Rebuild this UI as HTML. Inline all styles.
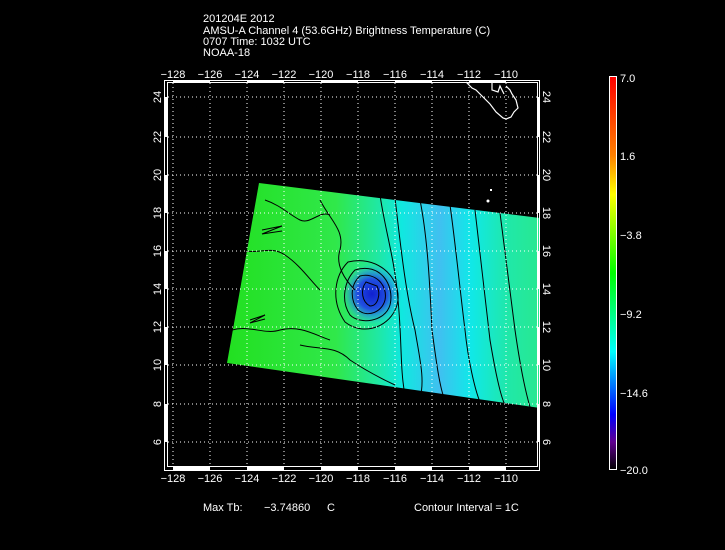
<!DOCTYPE html>
<html><head><style>
html,body{margin:0;padding:0;background:#000;width:725px;height:550px;overflow:hidden}
svg{display:block}
text{font-family:"Liberation Sans","DejaVu Sans",sans-serif;fill:#fff;font-size:11px}
</style></head><body>
<svg width="725" height="550" viewBox="0 0 725 550" xmlns="http://www.w3.org/2000/svg">
<defs>
<linearGradient id="g" x1="226" y1="0" x2="540" y2="0" gradientUnits="userSpaceOnUse">
<stop offset="0" stop-color="#22e020"/>
<stop offset="0.35" stop-color="#30e84a"/>
<stop offset="0.48" stop-color="#20e8a0"/>
<stop offset="0.56" stop-color="#10e8e0"/>
<stop offset="0.68" stop-color="#40c0f0"/>
<stop offset="0.78" stop-color="#10e8e8"/>
<stop offset="0.9" stop-color="#20e8a8"/>
<stop offset="1" stop-color="#28e890"/>
</linearGradient>
<radialGradient id="e" cx="372" cy="294" r="30" gradientUnits="userSpaceOnUse">
<stop offset="0" stop-color="#1020d0"/>
<stop offset="0.5" stop-color="#2050e0"/>
<stop offset="1" stop-color="#30a0f0" stop-opacity="0"/>
</radialGradient>
<linearGradient id="cb" x1="0" y1="0" x2="0" y2="1">
<stop offset="0" stop-color="#ff0000"/>
<stop offset="0.2" stop-color="#ff8000"/>
<stop offset="0.3" stop-color="#ffff00"/>
<stop offset="0.5" stop-color="#00ff00"/>
<stop offset="0.6" stop-color="#00ff80"/>
<stop offset="0.7" stop-color="#00ffff"/>
<stop offset="0.8" stop-color="#0060ff"/>
<stop offset="0.86" stop-color="#0000ff"/>
<stop offset="0.93" stop-color="#600090"/>
<stop offset="1" stop-color="#000000"/>
</linearGradient>
</defs>
<text x="203" y="22">201204E 2012</text>
<text x="203" y="34">AMSU-A Channel 4 (53.6GHz) Brightness Temperature (C)</text>
<text x="203" y="45">0707 Time: 1032 UTC</text>
<text x="203" y="56">NOAA-18</text>

<polygon points="259,183 540,218 540,408 227,363" fill="url(#g)"/>
<circle cx="372" cy="294" r="30" fill="url(#e)"/>
<g fill="none" stroke="#000" stroke-width="1">
<path d="M355,270 C345,280 340,300 350,315 C360,325 385,322 390,305 C395,285 380,262 355,270Z"/>
<path d="M360,276 C350,285 350,300 358,310 C368,318 382,312 385,300 C388,285 375,272 360,276Z"/>
<path d="M366,282 C360,290 362,302 370,306 C378,306 381,294 377,286Z"/>
<path d="M348,262 C335,275 330,300 345,322 C365,338 395,325 398,300 C400,275 375,255 348,262Z"/>
<path d="M380,195 C385,230 395,260 398,300 C402,340 400,370 405,395"/>
<path d="M395,198 C400,240 405,290 415,330 C420,360 425,380 420,398"/>
<path d="M420,200 C428,240 430,290 432,330 C436,360 440,390 445,400"/>
<path d="M450,205 C455,240 460,290 465,330 C468,360 475,390 480,402"/>
<path d="M475,210 C480,250 485,300 490,340 C495,370 500,395 505,405"/>
<path d="M500,213 C505,250 510,290 515,330 C520,365 525,390 530,407"/>
<path d="M265,200 C280,205 290,215 300,220 C310,225 320,210 330,215"/>
<path d="M240,250 C260,255 270,245 285,255 C300,265 310,280 320,290"/>
<path d="M232,330 C250,325 265,335 280,330 C300,325 315,335 330,340"/>
<path d="M250,320 l15,-5 l-15,8 l15,-4"/>
<path d="M262,230 l20,-4 l-20,8 l20,-3"/>
<path d="M300,345 C320,350 335,345 350,360 C365,370 380,378 395,385"/>
<path d="M320,200 C330,220 345,230 340,250 C335,265 345,280 355,290"/>
</g>

<g stroke="#fff" stroke-width="1" stroke-dasharray="1,3">
<path d="M173,83V466M210,83V466M247,83V466M284,83V466M321,83V466M358,83V466M395,83V466M432,83V466M469,83V466M506,83V466"/>
<path d="M168,97H537M168,137H537M168,175H537M168,213H537M168,251H537M168,289H537M168,327H537M168,365H537M168,404H537M168,442H537"/>
</g>
<g fill="none" stroke="#fff" stroke-width="1.2">
<path d="M466,82 L472,88 L476,90 L482,96 L490,104 L496,112 L503,118 L506,119 L511,117 L514,112 L518,108 L516,100 L512,94 L510,90 L506,86"/>
<path d="M492,82 L492,90 L498,92 L500,86 L504,94"/>
</g>
<rect x="490" y="189" width="2" height="2" fill="#fff"/>
<circle cx="488" cy="201" r="1.5" fill="#fff"/>
<g fill="none" stroke="#fff" stroke-width="1">
<rect x="164.5" y="80.5" width="375" height="390"/>
<rect x="167.5" y="82.5" width="370" height="384"/>
</g>
<g fill="#fff">
<rect x="164" y="97" width="3" height="40"/><rect x="164" y="175" width="3" height="38"/><rect x="164" y="251" width="3" height="38"/><rect x="164" y="327" width="3" height="38"/><rect x="164" y="404" width="3" height="38"/>
<rect x="537" y="97" width="3" height="40"/><rect x="537" y="175" width="3" height="38"/><rect x="537" y="251" width="3" height="38"/><rect x="537" y="327" width="3" height="38"/><rect x="537" y="404" width="3" height="38"/>
<rect x="173" y="80" width="37" height="3"/><rect x="247" y="80" width="37" height="3"/><rect x="321" y="80" width="37" height="3"/><rect x="395" y="80" width="37" height="3"/><rect x="469" y="80" width="37" height="3"/>
<rect x="173" y="466" width="37" height="4"/><rect x="247" y="466" width="37" height="4"/><rect x="321" y="466" width="37" height="4"/><rect x="395" y="466" width="37" height="4"/><rect x="469" y="466" width="37" height="4"/>
</g>
<g text-anchor="middle">
<text x="173" y="78">−128</text><text x="210" y="78">−126</text><text x="247" y="78">−124</text><text x="284" y="78">−122</text><text x="321" y="78">−120</text><text x="358" y="78">−118</text><text x="395" y="78">−116</text><text x="432" y="78">−114</text><text x="469" y="78">−112</text><text x="506" y="78">−110</text>
<text x="173" y="482">−128</text><text x="210" y="482">−126</text><text x="247" y="482">−124</text><text x="284" y="482">−122</text><text x="321" y="482">−120</text><text x="358" y="482">−118</text><text x="395" y="482">−116</text><text x="432" y="482">−114</text><text x="469" y="482">−112</text><text x="506" y="482">−110</text>
</g>
<g text-anchor="middle">
<text transform="translate(161,97) rotate(-90)">24</text><text transform="translate(161,137) rotate(-90)">22</text><text transform="translate(161,175) rotate(-90)">20</text><text transform="translate(161,213) rotate(-90)">18</text><text transform="translate(161,251) rotate(-90)">16</text><text transform="translate(161,289) rotate(-90)">14</text><text transform="translate(161,327) rotate(-90)">12</text><text transform="translate(161,365) rotate(-90)">10</text><text transform="translate(161,404) rotate(-90)">8</text><text transform="translate(161,442) rotate(-90)">6</text>
<text transform="translate(543,97) rotate(90)">24</text><text transform="translate(543,137) rotate(90)">22</text><text transform="translate(543,175) rotate(90)">20</text><text transform="translate(543,213) rotate(90)">18</text><text transform="translate(543,251) rotate(90)">16</text><text transform="translate(543,289) rotate(90)">14</text><text transform="translate(543,327) rotate(90)">12</text><text transform="translate(543,365) rotate(90)">10</text><text transform="translate(543,404) rotate(90)">8</text><text transform="translate(543,442) rotate(90)">6</text>
</g>
<rect x="609.5" y="76.5" width="7" height="393" fill="url(#cb)" stroke="#fff" stroke-width="1"/>
<text x="620" y="82">7.0</text>
<text x="620" y="160">1.6</text>
<text x="620" y="239">−3.8</text>
<text x="620" y="318">−9.2</text>
<text x="620" y="397">−14.6</text>
<text x="620" y="474">−20.0</text>
<text x="203" y="511">Max Tb:</text>
<text x="264" y="511">−3.74860</text>
<text x="327" y="511">C</text>
<text x="414" y="511">Contour Interval = 1C</text>
</svg>
</body></html>
